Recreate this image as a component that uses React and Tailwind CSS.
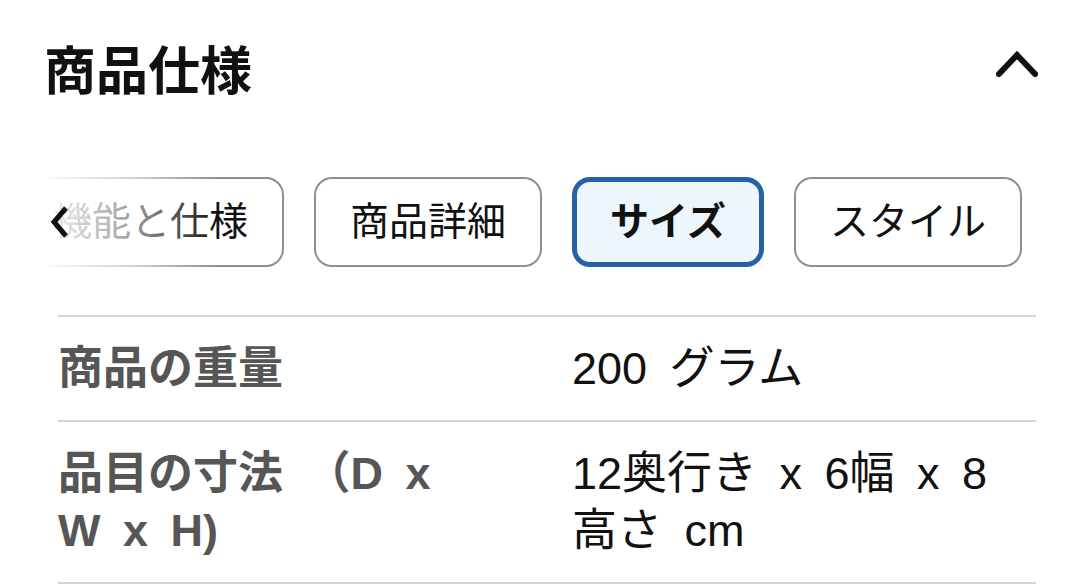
import React from 'react';

const tabs = [
  { label: '機能と仕様' },
  { label: '商品詳細' },
  { label: 'サイズ', active: true },
  { label: 'スタイル' },
];

const specs = [
  { name: '商品の重量', value: '200 グラム' },
  { name: '品目の寸法 （D x W x H)', value: '12奥行き x 6幅 x 8高さ cm' },
];

const App = () => {
  return (
    <div className="w-[1080px] h-[584px] overflow-hidden bg-white text-[#111] font-['Liberation_Sans','Noto_Sans_CJK_JP',sans-serif]">
      {/* Section header */}
      <div className="h-[144px] flex items-center justify-between pl-[44px] pr-[42px]">
        <h2 className="text-[52px] font-bold leading-none">商品仕様</h2>
        <svg width="42" height="28" viewBox="0 0 42 28" className="-mt-[16px]">
          <path d="M3 24 L21 5 L39 24" fill="none" stroke="#111" strokeWidth="6" strokeLinecap="round" strokeLinejoin="miter" />
        </svg>
      </div>

      {/* Tabs */}
      <div className="relative mt-[33px] ml-[47px] overflow-hidden">
        <div className="flex gap-[30px] -ml-[30px]">
          {tabs.map((tab) =>
            tab.active ? (
              <button
                key={tab.label}
                className="h-[90px] shrink-0 px-[33px] flex items-center rounded-[18px] border-[5px] border-[#2563a6] bg-[#edf6fc] text-[39px] font-bold text-[#111]"
              >
                {tab.label}
              </button>
            ) : (
              <button
                key={tab.label}
                className="h-[90px] shrink-0 px-[34px] flex items-center rounded-[18px] border-2 border-[#8f8f8f] bg-white text-[39px] text-[#111]"
              >
                {tab.label}
              </button>
            )
          )}
        </div>
        {/* fade + scroll back arrow */}
        <div className="absolute left-0 top-0 h-full w-[170px] bg-gradient-to-r from-white/95 via-white/60 to-transparent" />
        <svg width="22" height="34" viewBox="0 0 22 34" className="absolute left-[2px] top-[28px]">
          <path d="M17 3 L5 17 L17 31" fill="none" stroke="#111" strokeWidth="5" strokeLinejoin="miter" />
        </svg>
      </div>

      {/* Spec rows */}
      <div className="mt-[48px] ml-[58px] w-[978px]">
        {specs.map((row) => (
          <div key={row.name} className="grid grid-cols-[514px_1fr] border-t-2 border-[#d5d5d5] py-[23px] text-[45px] leading-[57px] [word-spacing:10px]">
            <div className="max-w-[400px] font-bold text-[#565656]">{row.name}</div>
            <div className="max-w-[440px] text-[#111]">{row.value}</div>
          </div>
        ))}
        <div className="border-t-2 border-[#d5d5d5]" />
      </div>
    </div>
  );
};

export default App;
